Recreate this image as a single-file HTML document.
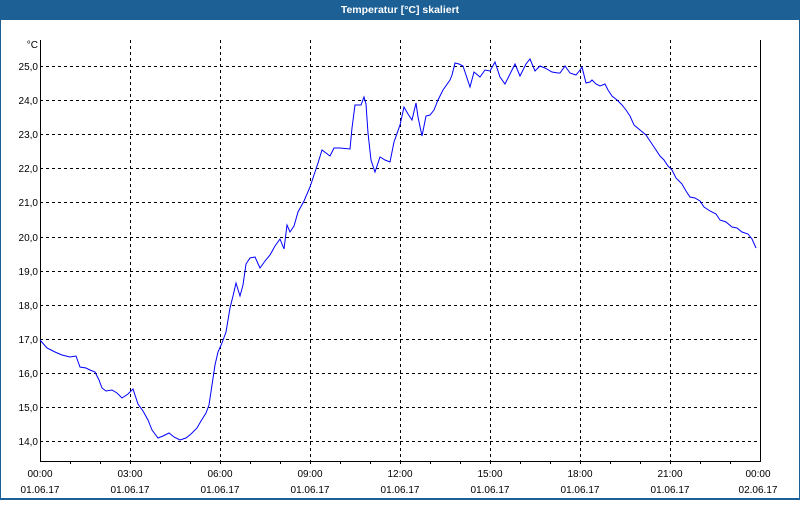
<!DOCTYPE html>
<html><head><meta charset="utf-8"><style>
html,body{margin:0;padding:0;background:#fff;}
body{width:800px;height:500px;overflow:hidden;font-family:"Liberation Sans",sans-serif;}
</style></head><body>
<svg width="800" height="500" xmlns="http://www.w3.org/2000/svg" font-family="Liberation Sans, sans-serif" font-size="10">
<rect x="0" y="0" width="800" height="500" fill="#fff"/>
<rect x="0" y="0" width="800" height="20" fill="#1d6096"/>
<rect x="0" y="20" width="1" height="480" fill="#1d6096"/>
<rect x="799" y="20" width="1" height="480" fill="#1d6096"/>
<rect x="0" y="498" width="800" height="2" fill="#1d6096"/>
<text x="400" y="13" fill="#fff" font-weight="bold" font-size="10.5" text-anchor="middle">Temperatur [°C] skaliert</text>
<g stroke="#000" stroke-width="1" stroke-dasharray="3,3" shape-rendering="crispEdges">
<line x1="40" y1="66.5" x2="760" y2="66.5"/><line x1="40" y1="100.5" x2="760" y2="100.5"/>
<line x1="40" y1="134.5" x2="760" y2="134.5"/><line x1="40" y1="168.5" x2="760" y2="168.5"/>
<line x1="40" y1="202.5" x2="760" y2="202.5"/><line x1="40" y1="237.5" x2="760" y2="237.5"/>
<line x1="40" y1="271.5" x2="760" y2="271.5"/><line x1="40" y1="305.5" x2="760" y2="305.5"/>
<line x1="40" y1="339.5" x2="760" y2="339.5"/><line x1="40" y1="373.5" x2="760" y2="373.5"/>
<line x1="40" y1="407.5" x2="760" y2="407.5"/><line x1="40" y1="441.5" x2="760" y2="441.5"/>
<line x1="130.5" y1="40" x2="130.5" y2="461"/><line x1="220.5" y1="40" x2="220.5" y2="461"/>
<line x1="310.5" y1="40" x2="310.5" y2="461"/><line x1="400.5" y1="40" x2="400.5" y2="461"/>
<line x1="490.5" y1="40" x2="490.5" y2="461"/><line x1="580.5" y1="40" x2="580.5" y2="461"/>
<line x1="670.5" y1="40" x2="670.5" y2="461"/>
</g>
<g stroke="#000" stroke-width="1" shape-rendering="crispEdges" fill="none">
<polyline points="40.5,40 40.5,461.5 760.5,461.5 760.5,40"/>
<path d="M70.5,461v3M100.5,461v3M130.5,461v3M160.5,461v3M190.5,461v3M220.5,461v3M250.5,461v3M280.5,461v3M310.5,461v3M340.5,461v3M370.5,461v3M400.5,461v3M430.5,461v3M460.5,461v3M490.5,461v3M520.5,461v3M550.5,461v3M580.5,461v3M610.5,461v3M640.5,461v3M670.5,461v3M700.5,461v3M730.5,461v3"/>
</g>
<g fill="#000" text-anchor="end">
<text x="38" y="48">°C</text>
<text x="38" y="70">25,0</text><text x="38" y="104">24,0</text><text x="38" y="138">23,0</text>
<text x="38" y="172">22,0</text><text x="38" y="206">21,0</text><text x="38" y="241">20,0</text>
<text x="38" y="275">19,0</text><text x="38" y="309">18,0</text><text x="38" y="343">17,0</text>
<text x="38" y="377">16,0</text><text x="38" y="411">15,0</text><text x="38" y="445">14,0</text>
</g>
<g fill="#000" text-anchor="middle">
<text x="40" y="477">00:00</text><text x="40" y="493">01.06.17</text>
<text x="130" y="477">03:00</text><text x="130" y="493">01.06.17</text>
<text x="220" y="477">06:00</text><text x="220" y="493">01.06.17</text>
<text x="310" y="477">09:00</text><text x="310" y="493">01.06.17</text>
<text x="400" y="477">12:00</text><text x="400" y="493">01.06.17</text>
<text x="490" y="477">15:00</text><text x="490" y="493">01.06.17</text>
<text x="580" y="477">18:00</text><text x="580" y="493">01.06.17</text>
<text x="670" y="477">21:00</text><text x="670" y="493">01.06.17</text>
<text x="758" y="477">00:00</text><text x="758" y="493">02.06.17</text>
</g>
<polyline fill="none" stroke="#0000ff" stroke-width="1" points="40,340 47,348 55,352 62,355 70,357 76,356 80,367 86,368 90,370 95,372 99,380 102,388 106,391 112,390 117,393 122,398 128,394 133,389 138,404 143,411 148,420 152,430 158,438 163,436 169,433 174,437 180,440 186,438 191,434 197,428 201,421 206,413 209,405 212,385 215,365 218,352 222,343 226,332 230,308 233,296 236,283 240,296 243,285 246,264 250,258 255,257 260,268 265,261 270,255 275,246 280,239 284,249 287,225 290,232 294,226 298,212 304,201 310,187 314,175 318,163 322,150 326,153 330,156 334,148 340,148 350,149 352,128 355,105 361,105 364,97 366,104 368,133 371,160 375,172 380,157 385,160 390,162 394,142 400,125 404,107 408,114 412,120 416,103 418,117 422,136 426,116 430,115 434,110 438,100 443,90 450,80 452,75 455,63 459,64 463,66 466,75 470,87 474,72 480,77 485,70 490,71 495,62 500,77 505,84 512,70 515,64 520,76 526,64 530,59 535,71 540,66 545,68 552,72 558,73 560,73 565,66 570,73 576,75 580,70 582,67 586,83 590,82 592,80 596,84 600,86 605,84 608,90 612,96 617,100 622,105 626,110 630,116 634,125 640,130 646,135 650,141 654,147 660,156 664,160 668,166 672,170 676,178 682,184 686,191 690,197 695,198 700,201 704,207 710,211 716,214 720,220 726,222 732,227 737,228 742,232 748,234 752,239 756,248"/>
</svg>
</body></html>
